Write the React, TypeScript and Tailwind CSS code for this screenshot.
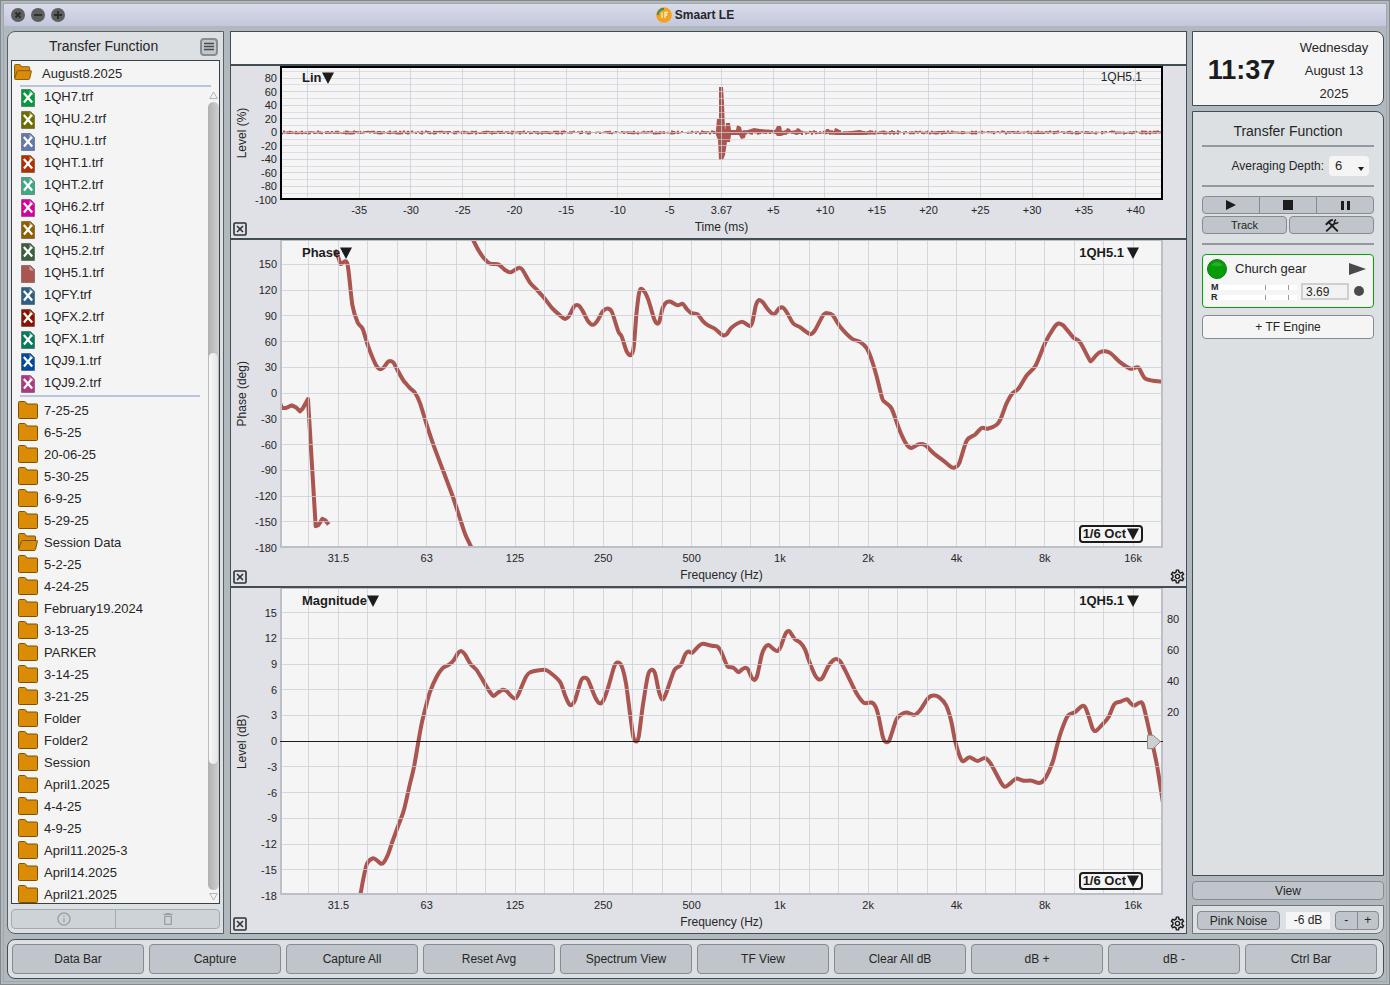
import { FC, ReactNode, useState } from "react";
import { MdDeleteOutline, MdInfoOutline, MdOutlineSettings } from "react-icons/md";

type Point = [number, number];

const files = [
  { name: "1QH7.trf", color: "#06983c", hidden: true },
  { name: "1QHU.2.trf", color: "#6e6e00", hidden: true },
  { name: "1QHU.1.trf", color: "#6478ae", hidden: true },
  { name: "1QHT.1.trf", color: "#b03000", hidden: true },
  { name: "1QHT.2.trf", color: "#3fa885", hidden: true },
  { name: "1QH6.2.trf", color: "#d600a2", hidden: true },
  { name: "1QH6.1.trf", color: "#8f5f00", hidden: true },
  { name: "1QH5.2.trf", color: "#3f5f3c", hidden: true },
  { name: "1QH5.1.trf", color: "#aa5550", hidden: false },
  { name: "1QFY.trf", color: "#2f6083", hidden: true },
  { name: "1QFX.2.trf", color: "#8a1400", hidden: true },
  { name: "1QFX.1.trf", color: "#057a5c", hidden: true },
  { name: "1QJ9.1.trf", color: "#004a9c", hidden: true },
  { name: "1QJ9.2.trf", color: "#b03880", hidden: true },
];

const folders = [
  "7-25-25",
  "6-5-25",
  "20-06-25",
  "5-30-25",
  "6-9-25",
  "5-29-25",
  "Session Data",
  "5-2-25",
  "4-24-25",
  "February19.2024",
  "3-13-25",
  "PARKER",
  "3-14-25",
  "3-21-25",
  "Folder",
  "Folder2",
  "Session",
  "April1.2025",
  "4-4-25",
  "4-9-25",
  "April11.2025-3",
  "April14.2025",
  "April21.2025",
];

const commands = [
  "Data Bar",
  "Capture",
  "Capture All",
  "Reset Avg",
  "Spectrum View",
  "TF View",
  "Clear All dB",
  "dB +",
  "dB -",
  "Ctrl Bar",
];

const phaseWrapA: Point[] = [
  [150, 505], [156, 520], [168, 520], [185, 512], [198, 518], [210, 530], [219, 520], [234, 493],
  [257, 875], [265, 872], [277, 853], [286, 857], [296, 870],
];

const phaseWrapB: Point[] = [
  [314, 45], [326, 70], [332, 87], [352, 86], [367, 210], [383, 263], [398, 282], [414, 333],
  [438, 391], [450, 403], [462, 397], [475, 380], [489, 382], [502, 405], [520, 437], [540, 460],
  [555, 474], [570, 505], [590, 570], [610, 630], [640, 710], [668, 785], [690, 852], [706, 900],
  [726, 942],
];

const phaseWrapC: Point[] = [
  [728, 12], [745, 45], [762, 70], [780, 86], [805, 88], [825, 105], [842, 112], [865, 99],
  [877, 104], [900, 143], [920, 164], [945, 192], [965, 218], [985, 237], [1005, 252], [1017, 243],
  [1033, 214], [1046, 212], [1058, 228], [1075, 260], [1089, 270], [1102, 258], [1118, 230],
  [1133, 221], [1146, 232], [1165, 290], [1175, 305], [1190, 350], [1202, 361], [1211, 338],
  [1220, 230], [1229, 167], [1241, 167], [1255, 195], [1270, 245], [1278, 263], [1287, 263],
  [1298, 220], [1307, 204], [1320, 200], [1342, 211], [1358, 207], [1370, 222], [1383, 234],
  [1402, 238], [1418, 258], [1433, 271], [1455, 282], [1478, 301], [1490, 298], [1505, 278],
  [1535, 261], [1560, 274], [1568, 258], [1578, 210], [1588, 195], [1600, 204], [1615, 225],
  [1632, 238], [1648, 220], [1660, 219], [1672, 235], [1690, 266], [1710, 277], [1730, 292],
  [1743, 298], [1755, 286], [1780, 240], [1793, 235], [1808, 241], [1830, 275], [1865, 311],
  [1890, 321], [1910, 340], [1925, 375], [1940, 425], [1957, 492], [1965, 502], [1985, 522],
  [2010, 590], [2030, 630], [2045, 640], [2065, 629], [2085, 631], [2110, 655], [2145, 682],
  [2165, 698], [2176, 698], [2188, 685], [2210, 618], [2235, 600], [2255, 580], [2273, 582],
  [2300, 570], [2313, 550], [2330, 505], [2348, 475], [2365, 462], [2390, 422], [2417, 392],
  [2445, 325], [2470, 281], [2485, 266], [2500, 272], [2530, 308], [2550, 322], [2578, 374],
  [2585, 377], [2608, 353], [2638, 353], [2670, 382], [2702, 402], [2725, 398], [2748, 433],
  [2800, 441],
];

const magnitude: Point[] = [
  [389, 955], [400, 895], [411, 850], [428, 834], [440, 839], [453, 850], [462, 845], [475, 820],
  [485, 790], [505, 735], [522, 688], [540, 610], [552, 560], [565, 485], [575, 430], [590, 370],
  [600, 335], [620, 290], [638, 264], [655, 255], [670, 242], [684, 219], [694, 213], [705, 223],
  [722, 252], [740, 270], [760, 303], [775, 328], [790, 347], [803, 338], [818, 329], [830, 333],
  [843, 347], [855, 355], [864, 345], [888, 290], [902, 276], [943, 269], [960, 277], [990, 305],
  [1005, 345], [1017, 371], [1025, 374], [1035, 360], [1053, 302], [1063, 293], [1074, 299],
  [1095, 350], [1108, 369], [1120, 361], [1135, 320], [1153, 258], [1163, 247], [1175, 258],
  [1188, 310], [1200, 400], [1210, 470], [1218, 484], [1226, 470], [1238, 380], [1254, 285],
  [1265, 269], [1275, 280], [1287, 335], [1297, 358], [1308, 340], [1333, 270], [1352, 255],
  [1366, 222], [1375, 214], [1387, 218], [1405, 199], [1418, 191], [1445, 197], [1462, 199],
  [1472, 212], [1482, 235], [1493, 259], [1510, 263], [1526, 276], [1536, 268], [1546, 263],
  [1555, 269], [1565, 292], [1574, 299], [1582, 285], [1595, 225], [1605, 202], [1616, 195],
  [1628, 205], [1642, 213], [1652, 200], [1666, 162], [1677, 153], [1685, 163], [1695, 178],
  [1710, 187], [1725, 208], [1738, 245], [1755, 285], [1767, 298], [1778, 292], [1795, 258],
  [1810, 240], [1820, 237], [1832, 245], [1855, 290], [1880, 340], [1902, 368], [1925, 367],
  [1937, 380], [1946, 410], [1958, 468], [1965, 484], [1976, 484], [1985, 460], [2000, 416],
  [2015, 402], [2030, 397], [2053, 404], [2070, 390], [2095, 353], [2110, 346], [2127, 351],
  [2148, 375], [2163, 420], [2175, 480], [2190, 530], [2200, 543], [2218, 531], [2242, 542],
  [2265, 533], [2282, 550], [2315, 610], [2326, 619], [2340, 610], [2358, 595], [2380, 601],
  [2405, 601], [2428, 608], [2445, 595], [2468, 545], [2480, 500], [2493, 455], [2513, 407],
  [2535, 396], [2555, 378], [2565, 380], [2575, 405], [2588, 445], [2598, 452], [2615, 435],
  [2635, 412], [2653, 372], [2672, 364], [2691, 357], [2700, 367], [2712, 376], [2730, 367],
  [2740, 376], [2760, 460], [2780, 550], [2800, 675],
];

// Catmull-Rom through the sampled points
const smooth = (pts: Point[]) => {
  let d = `M${pts[0][0]} ${pts[0][1]}`;
  for (let i = 0; i < pts.length - 1; i++) {
    const a = pts[Math.max(i - 1, 0)];
    const b = pts[i];
    const c = pts[i + 1];
    const e = pts[Math.min(i + 2, pts.length - 1)];
    d += `C${b[0] + (c[0] - a[0]) / 7} ${b[1] + (c[1] - a[1]) / 7} ${c[0] - (e[0] - b[0]) / 7} ${
      c[1] - (e[1] - b[1]) / 7
    } ${c[0]} ${c[1]}`;
  }
  return d;
};

const polyline = (pts: Point[]) => "M" + pts.map((p) => p.join(" ")).join("L");

const random = (n: number) => {
  const v = Math.sin(n * 127.1 + 311.7) * 43758.5453;
  return v - Math.floor(v);
};

// noise floor of the impulse response
const noise = () => {
  let d = "";
  for (let x = 281; x < 1162; x += 2) {
    const amp = x > 726 && x < 920 ? 1.9 : 1.5;
    d += `M${x} ${132 - amp * random(x)}h2V${133 + amp * random(x + 0.5)}h-2Z`;
  }
  return d;
};

const impulse =
  "M716 130L717 119H719V87H723L724 103L725 130L726 123H730L731 130H736L737 125L741 127L742 131L748 130L754 128L760 129L775 130L777 126H781L782 131L786 130L787 128L790 129L791 131L796 130L797 128L800 129L802 132L825 132L826 129L829 129L830 131L834 131L835 128L838 129L842 132L860 130L866 132H900V133L862 135L840 135L836 135L825 133L802 133L797 135L790 133L781 136H777L775 133L746 133L745 138L741 139L739 135L731 135L730 142H727L725 155L723 160H719L718 140L716 135Z";

const range = (n: number) => Array.from({ length: n }, (_, i) => i);
const pct = (v: number) => `${(v * 100).toFixed(3)}%`;

const freqLines = range(29).map((i) => (29 + 29.43 * i) / 883);
const freqTicks = ["31.5", "63", "125", "250", "500", "1k", "2k", "4k", "8k", "16k"].map(
  (label, i) => ({ label, at: freqLines[1 + i * 3] })
);
const timeLines = range(17).map((i) => (27.4 + 51.76 * i) / 883);
const timeTicks = timeLines.slice(1).map((at, i) => {
  const t = (i - 7) * 5;
  return { label: t === 0 ? "3.67" : t > 0 ? `+${t}` : `${t}`, at };
});

const Triangle: FC = () => (
  <svg width="12" height="12" viewBox="0 0 12 12" aria-hidden="true" className="pointer-events-none">
    <path d="M0 0.500H12L6 12Z" fill="#1c1c1c" />
  </svg>
);

const ChartSelect: FC<{ label: string; value: string; boxed?: boolean; gap?: boolean }> = ({
  label,
  value,
  boxed,
  gap,
}) => (
  <div
    className={
      boxed
        ? "flex h-[18px] items-center gap-px rounded border-2 border-[#1c1c1c] bg-[#f5f5f5] px-[2px]"
        : gap
        ? "flex h-[18px] items-center gap-[3px]"
        : "flex h-[18px] items-center"
    }
  >
    <select
      aria-label={label}
      className="field-sizing-content appearance-none bg-transparent text-[13px] leading-4 font-bold text-[#1c1c1c]"
    >
      <option>{value}</option>
    </select>
    <Triangle />
  </div>
);

interface ChartProps {
  title: string;
  xTitle: string;
  yTop: number;
  yBottom: number;
  yTicks: number[];
  yLines: number[];
  xLines: number[];
  xTicks: { label: string; at: number }[];
  viewBox: string;
  heavy?: boolean;
  settings?: boolean;
  side?: ReactNode;
  trace: ReactNode;
  children?: ReactNode;
}

const Chart: FC<ChartProps> = ({
  title,
  xTitle,
  yTop,
  yBottom,
  yTicks,
  yLines,
  xLines,
  xTicks,
  viewBox,
  heavy,
  settings,
  side,
  trace,
  children,
}) => {
  const yAt = (v: number) => pct((yTop - v) / (yTop - yBottom));
  return (
    <section className="grid h-full grid-cols-[49px_1fr_23px] grid-rows-[minmax(0,1fr)_38px] bg-[#dfe1e6] text-[#262626]">
      <svg className="h-full w-full overflow-visible" aria-hidden="true">
        {yTicks.map((v) => (
          <text key={v} x="46" y={yAt(v)} dy="4" textAnchor="end" fontSize="11" fill="#262626">
            {v}
          </text>
        ))}
        <svg x="15" y="50%" overflow="visible">
          <text transform="rotate(-90)" textAnchor="middle" fontSize="12" fill="#262626">
            {title}
          </text>
        </svg>
      </svg>

      <div className="relative flex flex-col justify-between bg-[#f5f5f5]">
        <svg
          className="absolute inset-0 h-full w-full"
          viewBox={viewBox}
          preserveAspectRatio="none"
          fill="none"
          stroke="#aa5550"
        >
          {trace}
        </svg>
        <svg className="absolute inset-0 h-full w-full" shapeRendering="crispEdges">
          {yLines.map((v) => (
            <line
              key={v}
              x1="0"
              x2="100%"
              y1={yAt(v)}
              y2={yAt(v)}
              stroke={v % 20 !== 0 && heavy ? "#cdd0d8a0" : "#c8ccd4c0"}
            />
          ))}
          {xLines.map((v) => (
            <line key={v} x1={pct(v)} x2={pct(v)} y1="0" y2="100%" stroke="#c8ccd4c0" />
          ))}
        </svg>
        <div
          className={
            heavy
              ? "pointer-events-none absolute inset-0 border-2 border-black"
              : "pointer-events-none absolute inset-0 border-2 border-t border-[#bcbfc6]"
          }
        />
        {children}
      </div>

      <div className="relative">{side}</div>

      <div className="flex items-end pb-[2px] pl-[2px]">
        <button aria-label="Close plot">
          <svg width="14" height="14" viewBox="0 0 14 14" fill="none" stroke="#2e3234">
            <rect x="1" y="1" width="12" height="12" rx="1" strokeWidth="1.600" />
            <path d="M4 4L10 10M10 4L4 10" strokeWidth="1.600" />
          </svg>
        </button>
      </div>
      <svg className="h-full w-full overflow-visible" aria-hidden="true">
        {xTicks.map((t) => (
          <text key={t.label} x={pct(t.at)} y="14" textAnchor="middle" fontSize="11" fill="#262626">
            {t.label}
          </text>
        ))}
        <text x="50%" y="31" textAnchor="middle" fontSize="12" fill="#262626">
          {xTitle}
        </text>
      </svg>
      <div className="flex items-end justify-end pb-px">
        {settings && (
          <button aria-label="Plot settings">
            <MdOutlineSettings size={17} color="#1c1c1c" />
          </button>
        )}
      </div>
    </section>
  );
};

const FolderIcon: FC<{ open?: boolean }> = ({ open }) => (
  <svg width="20" height="18" viewBox="0 0 20 18" fill="#d98c04" stroke="#7d5206" aria-hidden="true">
    {open ? (
      <>
        <path d="M0.500 16V1.500Q0.500 0.500 1.500 0.500H6Q7 0.500 7.500 1.500L8.200 3H16.500Q17.500 3 17.500 4V9" />
        <path d="M4.500 7.500H18.700Q19.700 7.500 19.400 8.500L17.500 16.500Q17.200 17.500 16.200 17.500H1.500Q0.500 17.500 0.700 16.300L3.300 8.500Q3.600 7.500 4.500 7.500Z" />
      </>
    ) : (
      <path d="M0.500 16.500V1.500Q0.500 0.500 1.500 0.500H6.500Q7.500 0.500 8 1.500L8.700 3H18.500Q19.500 3 19.500 4V16.500Q19.500 17.500 18.500 17.500H1.500Q0.500 17.500 0.500 16.500Z" />
    )}
  </svg>
);

const FileIcon: FC<{ color: string; hidden: boolean }> = ({ color, hidden }) => (
  <svg width="14" height="18" viewBox="0 0 14 18" aria-hidden="true">
    <path d="M0.500 0.500H9.500L13.500 4.500V17.500H0.500Z" fill={color} stroke="#000" strokeOpacity="0.300" />
    <path d="M8.500 1L13 5.500H9.500Q8.500 5.500 8.500 4.500Z" fill="#fff" fillOpacity="0.450" />
    {hidden && <path d="M2.800 4L11.200 13.500M10.800 4L3 13.500" stroke="#fff" strokeWidth="2.200" />}
  </svg>
);

const DataBar: FC = () => (
  <aside className="flex min-h-0 w-[217px] shrink-0 flex-col rounded-l-lg border border-[#56616a] bg-[#dce0e3] px-[3px] pb-[4px]">
    <div className="flex h-7 shrink-0 items-center justify-between pt-px pr-[2px] pl-[38px]">
      <h2 className="text-[14px]">Transfer Function</h2>
      <button
        aria-label="Menu"
        className="flex size-[18px] items-center justify-center rounded border-2 border-[#858d92] bg-[#c0c6ca]"
      >
        <svg width="10" height="9" viewBox="0 0 10 9" stroke="#454b4f" strokeWidth="1.300">
          <path d="M0 1.500H10M0 4.500H10M0 7.500H10" />
        </svg>
      </button>
    </div>

    <div className="flex min-h-0 flex-1 flex-col border border-[#3b4247] bg-[#f4f4f4] text-[13px]">
      <button className="flex h-6 shrink-0 items-start gap-[10px] pt-[3px] pl-[2px] leading-5">
        <svg width="18" height="16" viewBox="0 0 20 18" fill="#d98c04" stroke="#7d5206" aria-hidden="true">
          <path d="M0.500 16V1.500Q0.500 0.500 1.500 0.500H6Q7 0.500 7.500 1.500L8.200 3H16.500Q17.500 3 17.500 4V9" />
          <path d="M4.500 7.500H18.700Q19.700 7.500 19.400 8.500L17.500 16.500Q17.200 17.500 16.200 17.500H1.500Q0.500 17.500 0.700 16.300L3.300 8.500Q3.600 7.500 4.500 7.500Z" />
        </svg>
        August8.2025
      </button>
      <div className="mr-2 ml-2 h-[2px] shrink-0 bg-[#b7c6dc]" />
      <div className="flex min-h-0 flex-1">
        <div className="min-w-0 flex-1 overflow-hidden">
          <ul>
            {files.map((f) => (
              <li key={f.name}>
                <button className="flex h-[22px] w-full items-start gap-[9px] pl-[9px] leading-5">
                  <span className="pt-[2px]">
                    <FileIcon color={f.color} hidden={f.hidden} />
                  </span>
                  {f.name}
                </button>
              </li>
            ))}
          </ul>
          <div className="mr-2 mb-[2px] ml-2 h-[2px] bg-[#b7c6dc]" />
          <ul>
            {folders.map((name) => (
              <li key={name}>
                <button className="flex h-[22px] w-full items-center gap-[6px] pl-[6px]">
                  <FolderIcon open={name === "Session Data"} />
                  <span className="pt-px">{name}</span>
                </button>
              </li>
            ))}
          </ul>
        </div>
        <div className="flex w-[11px] flex-col items-center gap-[3px] pt-1 pb-[2px] text-[#b4b4b4]">
          <svg width="9" height="8" viewBox="0 0 9 8" fill="none" stroke="currentColor">
            <path d="M4.500 1L8.300 7.500H0.700Z" />
          </svg>
          <div className="flex min-h-0 w-full flex-1 flex-col rounded-full bg-linear-to-r from-[#b0b0b0] to-[#d0d0d0]">
            <div className="h-[250px] shrink" />
            <div className="h-[413px] shrink rounded-full border border-[#bbb] bg-linear-to-r from-[#f8f8f8] to-[#e4e4e4]" />
          </div>
          <svg width="9" height="8" viewBox="0 0 9 8" fill="none" stroke="currentColor">
            <path d="M4.500 7L0.700 0.500H8.300Z" />
          </svg>
        </div>
      </div>
    </div>

    <div className="mt-[5px] flex h-[20px] shrink-0 rounded-sm border border-[#a4abaf] bg-[#cdd3d6] text-[#9aa1a5]">
      <button disabled aria-label="Info" className="flex flex-1 items-center justify-center border-r border-[#a4abaf]">
        <MdInfoOutline size={16} />
      </button>
      <button disabled aria-label="Delete" className="flex flex-1 items-center justify-center">
        <MdDeleteOutline size={16} />
      </button>
    </div>
  </aside>
);

const Plots: FC = () => (
  <main className="flex min-h-0 min-w-0 flex-1 flex-col border border-[#434d54]">
    <div className="h-8 shrink-0 bg-[#f5f5f5]" />
    <div className="h-[174px] shrink-0 border-t-2 border-[#434d54]">
      <Chart
        title="Level (%)"
        xTitle="Time (ms)"
        yTop={98}
        yBottom={-100}
        yTicks={[80, 60, 40, 20, 0, -20, -40, -60, -80, -100]}
        yLines={range(19).map((i) => 90 - i * 10)}
        xLines={timeLines}
        xTicks={timeTicks}
        viewBox="280 66 883 134"
        heavy
        trace={
          <g fill="#aa5550" stroke="none">
            <path d={noise()} />
            <path d={impulse} />
          </g>
        }
      >
        <div className="relative flex items-start justify-between pt-[3px] pr-[21px] pl-[22px]">
          <ChartSelect label="Impulse scale" value="Lin" />
          <span className="text-[12px] leading-[17px]">1QH5.1</span>
        </div>
      </Chart>
    </div>
    <div className="min-h-0 flex-1 border-t-2 border-[#434d54]">
      <Chart
        title="Phase (deg)"
        xTitle="Frequency (Hz)"
        yTop={178.5}
        yBottom={-180}
        yTicks={range(12).map((i) => 150 - i * 30)}
        yLines={range(11).map((i) => 150 - i * 30)}
        xLines={freqLines}
        xTicks={freqTicks}
        viewBox="150 15 2649 924"
        settings
        trace={
          <g strokeWidth="12" strokeLinejoin="round">
            <path d={polyline(phaseWrapA)} />
            <path d={smooth(phaseWrapB)} />
            <path d={smooth(phaseWrapC)} />
          </g>
        }
      >
        <div className="relative flex justify-between pt-1 pr-[24px] pl-[22px]">
          <ChartSelect label="Plot type" value="Phase" />
          <ChartSelect label="Phase trace" value="1QH5.1" gap />
        </div>
        <div className="relative flex justify-end pr-[20px] pb-[5px]">
          <ChartSelect label="Phase smoothing" value="1/6 Oct" boxed />
        </div>
      </Chart>
    </div>
    <div className="min-h-0 flex-1 border-t-2 border-[#434d54]">
      <Chart
        title="Level (dB)"
        xTitle="Frequency (Hz)"
        yTop={17.87}
        yBottom={-18}
        yTicks={range(12).map((i) => 15 - i * 3)}
        yLines={range(11).map((i) => 15 - i * 3)}
        xLines={freqLines}
        xTicks={freqTicks}
        viewBox="150 24 2649 921"
        settings
        side={
          <svg className="absolute inset-0 h-full w-full overflow-visible">
            {[80, 60, 40, 20].map((v, i) => (
              <text key={v} x="4" y={pct((31 + 31 * i) / 307)} dy="4" fontSize="11" fill="#262626">
                {v}
              </text>
            ))}
            <svg x="-16" y="49.800%" overflow="visible">
              <path d="M0.500 -6H6L13.500 0.500L6 7.500H0.500Z" fill="#cfcfcf" stroke="#8a8a8a" />
            </svg>
          </svg>
        }
        trace={<path d={smooth(magnitude)} strokeWidth="12" strokeLinejoin="round" />}
      >
        <svg className="pointer-events-none absolute inset-0 h-full w-full" shapeRendering="crispEdges">
          <line x1="0" x2="100%" y1="49.800%" y2="49.800%" stroke="#1c1c1c" />
        </svg>
        <div className="relative flex justify-between pt-1 pr-[24px] pl-[22px]">
          <ChartSelect label="Plot type" value="Magnitude" />
          <ChartSelect label="Magnitude trace" value="1QH5.1" gap />
        </div>
        <div className="relative flex justify-end pr-[20px] pb-[5px]">
          <ChartSelect label="Magnitude smoothing" value="1/6 Oct" boxed />
        </div>
      </Chart>
    </div>
  </main>
);

const Meter: FC<{ name: string }> = ({ name }) => (
  <div className="flex h-[10px] items-center">
    <span className="w-[8px] text-[9px] leading-[10px] font-bold">{name}</span>
    <div className="flex h-[5px] w-[78px] justify-end gap-[22px] bg-white pr-[8px]">
      <span className="w-px bg-[#9a9a9a]" />
      <span className="w-px bg-[#9a9a9a]" />
    </div>
  </div>
);

const Rule: FC = () => <div className="h-[2px] shrink-0 bg-[#93999e]" />;

const ControlBar: FC = () => {
  const [depth, setDepth] = useState<string>("6");
  const [delay, setDelay] = useState<string>("3.69");

  return (
    <aside className="flex w-[192px] shrink-0 flex-col gap-[5px]">
      <div className="flex h-[75px] shrink-0 items-center rounded-r-lg border border-[#434d54] bg-[#f5f5f5] pt-[3px]">
        <div className="w-[97px] text-center text-[27px] font-bold text-[#1c1c1c]">11:37</div>
        <div className="flex-1 pr-[5px] text-center text-[13px] leading-[23px]">
          <p>Wednesday</p>
          <p>August 13</p>
          <p>2025</p>
        </div>
      </div>

      <div className="flex min-h-0 flex-1 flex-col rounded-tr-lg border border-[#434d54] bg-[#dce0e3] px-[9px]">
        <h2 className="h-[33px] shrink-0 pt-[9px] text-center text-[14px] leading-5">Transfer Function</h2>
        <Rule />
        <div className="flex h-[38px] items-center justify-end gap-[5px] pr-[5px] text-[12px]">
          <label htmlFor="depth">Averaging Depth:</label>
          <div className="relative flex">
            <select
              id="depth"
              value={depth}
              onChange={(e) => setDepth(e.target.value)}
              className="h-5 w-10 appearance-none rounded-sm bg-[#f5f5f5] pl-[6px] text-[13px]"
            >
              <option>4</option>
              <option>6</option>
              <option>8</option>
            </select>
            <svg width="6" height="4" viewBox="0 0 6 4" className="pointer-events-none absolute right-[5px] bottom-[5px]">
              <path d="M0 0H6L3 4Z" fill="#1c1c1c" />
            </svg>
          </div>
        </div>
        <Rule />
        <div className="my-[9px] flex flex-col gap-[2px] text-[12px]">
          <div className="flex h-[18px] divide-x divide-[#848c92] rounded-sm border border-[#848c92] bg-[#bfc5ca]">
            <button aria-label="Play" className="flex flex-1 items-center justify-center">
              <svg width="10" height="10" viewBox="0 0 10 10">
                <path d="M0 0L10 5L0 10Z" fill="#1c1c1c" />
              </svg>
            </button>
            <button aria-label="Stop" className="flex flex-1 items-center justify-center">
              <span className="size-[10px] bg-[#1c1c1c]" />
            </button>
            <button aria-label="Pause" className="flex flex-1 items-center justify-center gap-[3px]">
              <span className="h-[9px] w-[3px] bg-[#1c1c1c]" />
              <span className="h-[9px] w-[3px] bg-[#1c1c1c]" />
            </button>
          </div>
          <div className="flex h-[18px] gap-[2px]">
            <button className="flex flex-1 items-center justify-center rounded-sm border border-[#848c92] bg-[#bfc5ca] text-[11px]">
              Track
            </button>
            <button
              aria-label="Tools"
              className="flex flex-1 items-center justify-center rounded-sm border border-[#848c92] bg-[#bfc5ca]"
            >
              <svg width="14" height="13" viewBox="0 0 14 13" stroke="#1c1c1c" fill="none">
                <path d="M4 3.500L12.800 12.300" strokeWidth="1.900" />
                <path d="M0.800 5.800L4.500 2.300Q6 0.900 7.800 1" strokeWidth="2" />
                <path d="M1.200 12.300L10 4" strokeWidth="1.800" />
                <path d="M11 0.600Q8.800 1.800 9.600 3.700Q11.300 5.300 13.300 3.200" strokeWidth="1.500" />
              </svg>
            </button>
          </div>
        </div>
        <Rule />

        <div className="mt-[9px] h-[54px] shrink-0 rounded border border-[#0a9f0a] bg-[#f5f5f5] pl-1">
          <div className="flex h-7 items-center pr-[7px]">
            <svg width="20" height="20" viewBox="0 0 20 20">
              <circle cx="10" cy="10" r="9.500" fill="#069c06" stroke="#0b7a0b" />
              <path d="M4 6Q10 0 16 6Q10 8.500 4 6Z" fill="#fff" fillOpacity="0.150" />
            </svg>
            <span className="flex-1 pl-[8px] text-[13px]">Church gear</span>
            <svg width="17" height="12" viewBox="0 0 17 12">
              <path d="M0 0L17 6L0 12Z" fill="#4a4a4a" />
            </svg>
          </div>
          <div className="flex h-5 items-start pl-[4px]">
            <div className="-mt-px">
              <Meter name="M" />
              <Meter name="R" />
            </div>
            <input
              aria-label="Delay (ms)"
              value={delay}
              onChange={(e) => setDelay(e.target.value)}
              className="ml-[4px] h-[17px] w-[48px] border-2 border-[#cfcfcf] bg-[#f2f2f2] pl-[3px] text-[12px]"
            />
            <span className="mt-[3px] ml-[5px] size-[10px] rounded-full bg-[#4a4a4a]" />
          </div>
        </div>
        <button className="mt-[7px] h-6 shrink-0 rounded border border-[#848c92] bg-[#f5f5f5] text-[12px]">
          + TF Engine
        </button>
      </div>

      <button className="h-[19px] shrink-0 rounded-sm border border-[#848c92] bg-[#bfc5ca] text-[12px] leading-[18px]">
        View
      </button>

      <div className="flex h-[29px] shrink-0 items-center rounded-br-lg border border-[#6c767d] bg-[#dce0e3] px-1 pt-px text-[12px]">
        <button className="h-[19px] w-[83px] rounded-sm border border-[#848c92] bg-[#bfc5ca] leading-[18px]">
          Pink Noise
        </button>
        <output className="ml-[6px] h-[17px] w-[44px] bg-[#f5f5f5] text-center leading-[17px]">-6 dB</output>
        <div className="ml-[5px] flex h-[19px] flex-1 divide-x divide-[#848c92] rounded border border-[#848c92] bg-[#bfc5ca] leading-[17px]">
          <button className="flex-1">-</button>
          <button className="flex-1">+</button>
        </div>
      </div>
    </aside>
  );
};

const TitleBar: FC = () => (
  <header className="grid h-[22px] shrink-0 grid-cols-[1fr_auto_1fr] items-center bg-linear-to-b from-[#dadcea] to-[#c3c7dd] px-[7px]">
    <div className="flex gap-[6px]">
      {[
        { name: "Close", d: "M4.500 4.500L9.500 9.500M9.500 4.500L4.500 9.500" },
        { name: "Minimise", d: "M3 7H11" },
        { name: "Zoom", d: "M3 7H11M7 3V11" },
      ].map((b) => (
        <button key={b.name} aria-label={b.name}>
          <svg width="14" height="14" viewBox="0 0 14 14">
            <circle cx="7" cy="7" r="7" fill="#5f5f5f" />
            <path d={b.d} stroke="#2b2b2b" strokeWidth="1.800" />
          </svg>
        </button>
      ))}
    </div>
    <div className="flex items-center gap-[3px]">
      <svg width="16" height="16" viewBox="0 0 16 16" aria-hidden="true">
        <circle cx="8" cy="8" r="7.800" fill="#f2a31b" />
        <path d="M1.800 8A6.200 6.200 0 0 1 8 1.800" fill="none" stroke="#2f8f6c" strokeWidth="2" />
        <path d="M6 5.500V11M9 11V5.500H12M9 8H11.300" fill="none" stroke="#fdf0d0" strokeWidth="1.300" />
      </svg>
      <h1 className="text-[12px] font-bold">Smaart LE</h1>
    </div>
  </header>
);

const App: FC = () => {
  return (
    <div className="h-screen border border-[#85898c] bg-[#b1b9be] p-[2px] font-['Liberation_Sans',Arial,sans-serif] text-[#262626]">
      <div className="flex h-full flex-col border border-[#a0a7ab]">
        <TitleBar />
        <div className="flex min-h-0 flex-1 flex-col gap-[5px] pt-[5px] pr-[2px] pb-[2px] pl-[3px]">
          <div className="flex min-h-0 flex-1">
            <DataBar />
            <div className="w-[6px] shrink-0" />
            <Plots />
            <div className="w-[5px] shrink-0" />
            <ControlBar />
          </div>
          <nav className="flex h-10 shrink-0 gap-[5px] rounded-lg border border-[#434d54] bg-[#dce0e3] p-[4px] pr-[6px]">
            {commands.map((c) => (
              <button
                key={c}
                className="min-w-0 flex-1 basis-0 rounded border border-[#848c92] bg-[#bfc5ca] text-[12px]"
              >
                {c}
              </button>
            ))}
          </nav>
        </div>
      </div>
    </div>
  );
};

export default App;
